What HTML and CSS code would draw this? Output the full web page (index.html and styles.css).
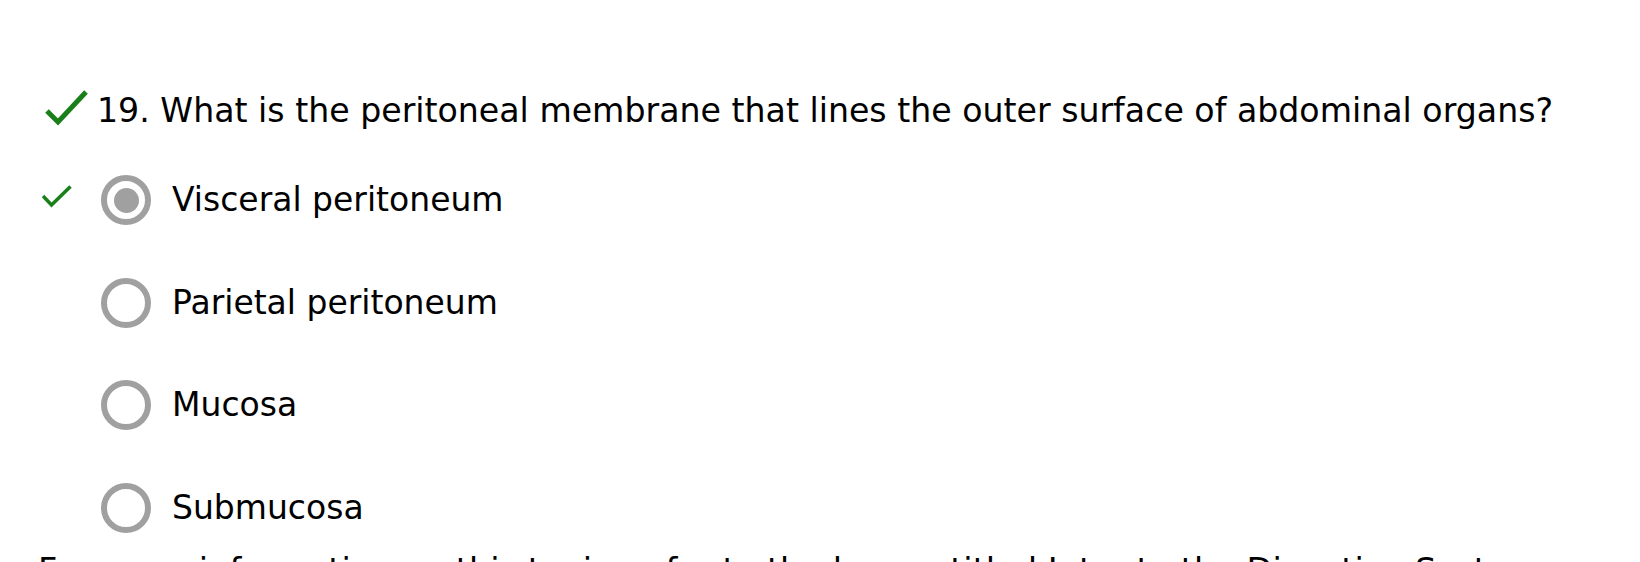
FILE: index.html
```html
<!DOCTYPE html>
<html lang="en">
<head>
<meta charset="utf-8">
<title>Quiz question 19</title>
<link rel="stylesheet" href="styles.css">
</head>
<body>
<main class="quiz">
  <div class="question">
    <svg class="q-check" width="44" height="36" viewBox="0 0 44 36" aria-hidden="true">
      <path d="M2 21 L13 32 L41 2" fill="none" stroke="#1a7f1a" stroke-width="5"/>
    </svg>
    <span class="q-text">19. What is the peritoneal membrane that lines the outer surface of abdominal organs?</span>
  </div>
  <ul class="options">
    <li class="option">
      <span class="mark">
        <svg width="30" height="23" viewBox="0 0 30 23" aria-hidden="true">
          <path d="M1 11 L9.5 20 L28.5 1.5" fill="none" stroke="#1a7f1a" stroke-width="3.5"/>
        </svg>
      </span>
      <span class="radio checked"></span>
      <span class="label">Visceral peritoneum</span>
    </li>
    <li class="option">
      <span class="mark"></span>
      <span class="radio"></span>
      <span class="label">Parietal peritoneum</span>
    </li>
    <li class="option">
      <span class="mark"></span>
      <span class="radio"></span>
      <span class="label">Mucosa</span>
    </li>
    <li class="option">
      <span class="mark"></span>
      <span class="radio"></span>
      <span class="label">Submucosa</span>
    </li>
  </ul>
  <p class="info">For more information on this topic, refer to the lesson titled Intro to the Digestive System.</p>
</main>
</body>
</html>
```
FILE: styles.css
```css
html, body {
  margin: 0;
  padding: 0;
  background: #ffffff;
}
body {
  overflow: hidden;
  height: 562px;
  font-family: "DejaVu Sans", Verdana, sans-serif;
  color: #000000;
}
.quiz {
  padding-top: 91px;
}
.question {
  display: flex;
  align-items: flex-start;
  padding-left: 45px;
  height: 40px;
}
.q-check {
  flex: none;
  margin-top: -1px;
  margin-right: 8px;
}
.q-text {
  font-size: 33.2px;
  line-height: 40px;
  white-space: nowrap;
}
.options {
  list-style: none;
  margin: 44px 0 0 0;
  padding: 0 0 0 42px;
  display: flex;
  flex-direction: column;
  gap: 52.5px;
}
.option {
  display: flex;
  align-items: center;
  height: 50px;
}
.mark {
  flex: none;
  width: 59px;
  height: 50px;
  display: flex;
  align-items: flex-start;
}
.mark svg {
  margin-top: 10px;
}
.radio {
  flex: none;
  box-sizing: border-box;
  width: 50px;
  height: 50px;
  border: 6px solid #a0a0a0;
  border-radius: 50%;
  display: flex;
  align-items: center;
  justify-content: center;
  margin-right: 21px;
}
.radio.checked::after {
  content: "";
  width: 25px;
  height: 25px;
  border-radius: 50%;
  background: #a0a0a0;
}
.label {
  font-size: 33px;
  line-height: 40px;
  white-space: nowrap;
}
.info {
  margin: 18px 0 0 0;
  padding-left: 38px;
  font-size: 33.6px;
  line-height: 40px;
  white-space: nowrap;
}
```
